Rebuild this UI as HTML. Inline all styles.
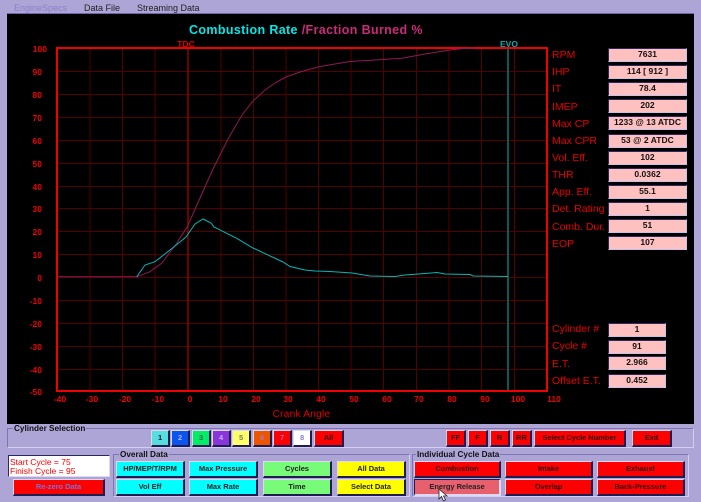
<!DOCTYPE html>
<html><head><meta charset="utf-8"><style>
html,body{margin:0;padding:0;width:701px;height:502px;overflow:hidden;background:#ada5d6}
#w{position:relative;width:701px;height:502px;filter:blur(.3px);font-family:"Liberation Sans",sans-serif}
#w div{position:absolute;box-sizing:border-box;white-space:nowrap}
.m{top:2px;font-size:9px;line-height:12px;color:#222}
.l{left:552px;color:#e80000;font-size:10.5px;line-height:13px;height:13px}
.v{left:608px;width:79px;height:14px;background:#ffc0c0;border:1.5px solid;border-color:#2c2860 #c8c2ea #c8c2ea #2c2860;color:#111;font-weight:bold;font-size:8.5px;line-height:11px;text-align:center;letter-spacing:.05px}
.s{width:58px}
.b{border:1px solid;border-color:#ddd8f4 #1e1c50 #1e1c50 #ddd8f4;border-right-width:2px;border-bottom-width:2px;font-weight:bold;font-size:7.5px;text-align:center;color:#222;letter-spacing:-.05px;line-height:14px}
.f{border:1px solid;border-color:#7d76b4 #d4cff0 #d4cff0 #7d76b4}
.t{font-weight:bold;font-size:8.2px;line-height:10px;background:#ada5d6;color:#111;padding:0 1px}
.r{background:#f00;color:#300}.c{background:#0ff}.g{background:#78fb78}.y{background:#ff0}
.n{top:430px;height:17px;line-height:14px;width:19px}
.i{top:430px;height:17px;line-height:14px;background:#f00;color:#300}
svg text{font-family:"Liberation Sans",sans-serif}
</style></head><body><div id="w">
<div class="m" style="left:14px;color:#8a82c6">EngineSpecs</div>
<div class="m" style="left:84px">Data File</div>
<div class="m" style="left:137px">Streaming Data</div>
<div style="left:7px;top:13px;width:687px;height:411px;background:#000;border-top:1px solid #6e66a8"></div>
<svg style="position:absolute;left:0;top:0" width="701" height="502">
<g stroke="#520000" stroke-width="1" fill="none">
<path d="M90 48V391M122.5 48V391M155 48V391M221 48V391M253.500 48V391M286 48V391M318.500 48V391M351 48V391M383.500 48V391M416.500 48V391M449 48V391M481.500 48V391M514.500 48V391"/>
<path d="M57 71.500H547M57 94.500H547M57 117.500H547M57 140.500H547M57 163.500H547M57 186.500H547M57 208.500H547M57 231.500H547M57 254.500H547M57 277.500H547M57 300.500H547M57 323.500H547M57 346.500H547M57 369.500H547"/>
</g>
<path d="M188 48V391" stroke="#b00000" stroke-width="1.200" fill="none"/>
<path d="M508 48V391" stroke="#0a8080" stroke-width="1.400" fill="none"/>
<rect x="57" y="48" width="490" height="343" fill="none" stroke="#f00000" stroke-width="2"/>
<path d="M57 276.800H136.700L150 271.700L161.700 263.300L176.700 243.300L187.300 226.700L200 198L213 169L220 155L228 139L242 115L253 101L265 90L275 83L286 77L300 72L320 66.500L350 61.500L375 60L402 58.300L425 54L450 50L463 48.500L475 48" fill="none" stroke="#901858" stroke-width="1"/>
<path d="M136.700 276.800L145 265L155 261.700L170 250L186 237L195 224L203 219L211 223L214 227L236.700 238.300L253 248L283 262L290 266.500L305 270L315 271L330 271.500L352 273L370 276L395 276.500L405 275L425 273.500L437 272.500L445 274L470 274.500L473 276L508 276.500" fill="none" stroke="#00b8b8" stroke-width="1"/>
<text x="189" y="34" font-size="12.500" font-weight="bold" letter-spacing=".36" fill="#00e8e8">Combustion Rate <tspan fill="#cc2a7a">/Fraction Burned %</tspan></text>
<g font-size="8.500" font-weight="bold" fill="#f00000" text-anchor="end">
<text x="47" y="52">100</text><text x="42" y="75">90</text><text x="42" y="98">80</text><text x="42" y="121">70</text><text x="42" y="144">60</text><text x="42" y="167">50</text><text x="42" y="190">40</text><text x="42" y="212">30</text><text x="42" y="235">20</text><text x="42" y="258">10</text><text x="42" y="281">0</text><text x="42" y="304">-10</text><text x="42" y="327">-20</text><text x="42" y="350">-30</text><text x="42" y="373">-40</text><text x="42" y="395">-50</text></g>
<g font-size="8.500" font-weight="bold" fill="#f00000" text-anchor="middle">
<text x="60" y="402">-40</text><text x="92" y="402">-30</text><text x="125" y="402">-20</text><text x="158" y="402">-10</text><text x="190" y="402">0</text><text x="223" y="402">10</text><text x="256" y="402">20</text><text x="288" y="402">30</text><text x="321" y="402">40</text><text x="354" y="402">50</text><text x="387" y="402">60</text><text x="419" y="402">70</text><text x="452" y="402">80</text><text x="485" y="402">90</text><text x="518" y="402">100</text><text x="554" y="402">110</text></g>
<text x="186" y="47" font-size="8.500" font-weight="bold" fill="#e00000" text-anchor="middle">TDC</text>
<text x="509" y="47" font-size="8.500" font-weight="bold" fill="#00b0b0" text-anchor="middle">EVO</text>
<text x="301.500" y="417" font-size="10" fill="#e00000" text-anchor="middle" letter-spacing=".3">Crank Angle</text>
</svg>
<div class="l" style="top:49px">RPM</div><div class="v" style="top:48px">7631</div>
<div class="l" style="top:66px">IHP</div><div class="v" style="top:65px">114 [ 912 ]</div>
<div class="l" style="top:83px">IT</div><div class="v" style="top:82px">78.4</div>
<div class="l" style="top:101px">IMEP</div><div class="v" style="top:99px">202</div>
<div class="l" style="top:118px">Max CP</div><div class="v" style="top:116px">1233 @ 13 ATDC</div>
<div class="l" style="top:135px">Max CPR</div><div class="v" style="top:134px">53 @ 2 ATDC</div>
<div class="l" style="top:152px">Vol. Eff.</div><div class="v" style="top:151px">102</div>
<div class="l" style="top:169px">THR</div><div class="v" style="top:168px">0.0362</div>
<div class="l" style="top:186px">App. Eff.</div><div class="v" style="top:185px">55.1</div>
<div class="l" style="top:203px">Det. Rating</div><div class="v" style="top:202px">1</div>
<div class="l" style="top:221px">Comb. Dur.</div><div class="v" style="top:219px">51</div>
<div class="l" style="top:238px">EOP</div><div class="v" style="top:236px">107</div>
<div class="l" style="top:323px">Cylinder #</div><div class="v s" style="top:323px">1</div>
<div class="l" style="top:340px">Cycle #</div><div class="v s" style="top:340px">91</div>
<div class="l" style="top:358px">E.T.</div><div class="v s" style="top:356px">2.966</div>
<div class="l" style="top:375px">Offset E.T.</div><div class="v s" style="top:374px">0.452</div>

<div class="f" style="left:7px;top:428px;width:687px;height:20px"></div>
<div class="t" style="left:13px;top:424px">Cylinder Selection</div>
<div class="b n" style="left:151px;background:#55dede;color:#114">1</div>
<div class="b n" style="left:171px;background:#0a55ee;color:#b8b0e8">2</div>
<div class="b n" style="left:192px;background:#00ee66;color:#555">3</div>
<div class="b n" style="left:212px;background:#8a35dc;color:#c0b8ee">4</div>
<div class="b n" style="left:232px;background:#ffff66;color:#777">5</div>
<div class="b n" style="left:253px;background:#ee5500;color:#9a80c0">6</div>
<div class="b n" style="left:273px;background:#f00;color:#9a70c8">7</div>
<div class="b n" style="left:293px;background:#fff;color:#8880c8">8</div>
<div class="b i" style="left:314px;width:30px">All</div>
<div class="b i" style="left:446px;width:20px">FF</div>
<div class="b i" style="left:468px;width:20px">F</div>
<div class="b i" style="left:490px;width:20px">R</div>
<div class="b i" style="left:512px;width:20px">RR</div>
<div class="b i" style="left:534px;width:92px">Select Cycle Number</div>
<div class="b i" style="left:632px;width:40px">Exit</div>

<div style="left:8px;top:455px;width:102px;height:22px;background:#fff;border:1.5px solid;border-color:#2c2860 #ddd8f4 #ddd8f4 #2c2860;color:#f00;font-size:8.5px;line-height:9.5px;padding:1.5px 0 0 1px">Start Cycle = 75<br>Finish Cycle = 95</div>
<div class="b" style="left:13px;top:479px;width:92px;height:17px;background:#f00;color:#7a70d8">Re-zero Data</div>

<div class="f" style="left:113px;top:454px;width:297px;height:43px"></div>
<div class="t" style="left:119px;top:450px">Overall Data</div>
<div class="b c" style="left:116px;top:461px;width:69px;height:17px">HP/MEP/T/RPM</div>
<div class="b c" style="left:189px;top:461px;width:69px;height:17px">Max Pressure</div>
<div class="b g" style="left:263px;top:461px;width:69px;height:17px">Cycles</div>
<div class="b y" style="left:337px;top:461px;width:69px;height:17px">All Data</div>
<div class="b c" style="left:116px;top:479px;width:69px;height:17px">Vol Eff</div>
<div class="b c" style="left:189px;top:479px;width:69px;height:17px">Max Rate</div>
<div class="b g" style="left:263px;top:479px;width:69px;height:17px">Time</div>
<div class="b y" style="left:337px;top:479px;width:69px;height:17px">Select Data</div>

<div class="f" style="left:412px;top:454px;width:277px;height:43px"></div>
<div class="t" style="left:416px;top:450px">Individual Cycle Data</div>
<div class="b r" style="left:414px;top:461px;width:87px;height:17px">Combustion</div>
<div class="b r" style="left:505px;top:461px;width:88px;height:17px">Intake</div>
<div class="b r" style="left:597px;top:461px;width:88px;height:17px">Exhaust</div>
<div class="b" style="left:414px;top:479px;width:87px;height:17px;background:#e8606e;border-color:#1e1c50 #ddd8f4 #ddd8f4 #1e1c50">Energy Release</div>
<div class="b r" style="left:505px;top:479px;width:88px;height:17px">Overlap</div>
<div class="b r" style="left:597px;top:479px;width:88px;height:17px">Back-Pressure</div>
<svg style="position:absolute;left:438px;top:488px" width="12" height="14"><path d="M1 1V11L3.500 8.500L5.500 13L7.500 12L5.500 8H9Z" fill="#fff" stroke="#222" stroke-width=".8"/></svg>
</div></body></html>
